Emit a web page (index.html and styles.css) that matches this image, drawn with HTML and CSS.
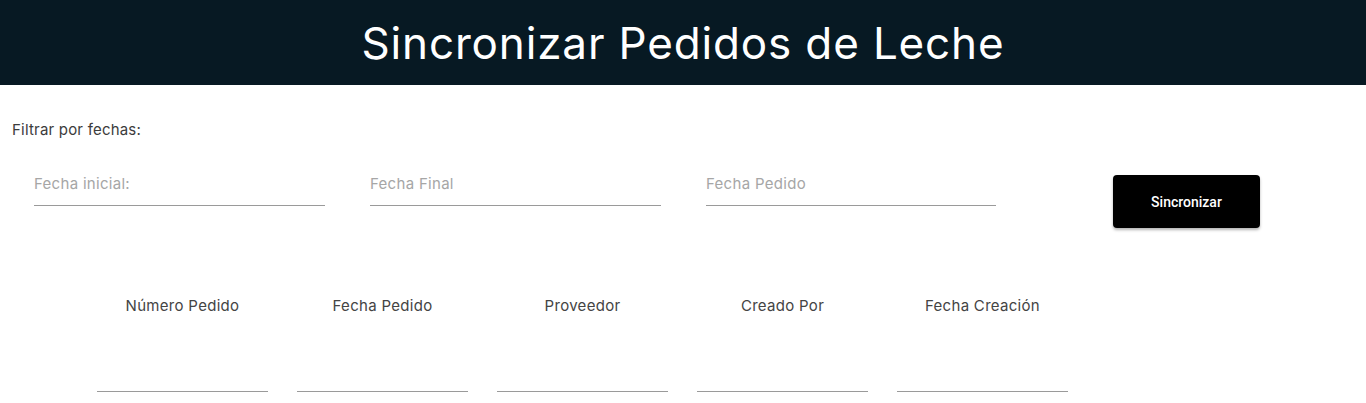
FILE: index.html
```html
<!DOCTYPE html>
<html lang="es">
<head>
<meta charset="utf-8">
<title>Sincronizar Pedidos de Leche</title>
<link rel="stylesheet" href="styles.css">
</head>
<body>
<header class="topbar">
  <h1 class="topbar-title">Sincronizar Pedidos de Leche</h1>
</header>
<main class="content">
  <section class="filters">
    <p class="filters-label">Filtrar por fechas:</p>
    <div class="filters-row">
      <div class="field"><input class="field-input" type="text" placeholder="Fecha inicial:"></div>
      <div class="field"><input class="field-input" type="text" placeholder="Fecha Final"></div>
      <div class="field"><input class="field-input" type="text" placeholder="Fecha Pedido"></div>
      <button class="sync-btn" type="button">Sincronizar</button>
    </div>
  </section>
  <section class="orders">
    <div class="orders-grid">
      <div class="orders-head">Número Pedido</div>
      <div class="orders-head">Fecha Pedido</div>
      <div class="orders-head">Proveedor</div>
      <div class="orders-head">Creado Por</div>
      <div class="orders-head">Fecha Creación</div>
      <div class="orders-cell"></div>
      <div class="orders-cell"></div>
      <div class="orders-cell"></div>
      <div class="orders-cell"></div>
      <div class="orders-cell"></div>
    </div>
  </section>
</main>
</body>
</html>
```
FILE: styles.css
```css
* { box-sizing: border-box; }

html, body {
  margin: 0;
  padding: 0;
  background: #ffffff;
  font-family: "Inter", "Open Sans", sans-serif;
}

.topbar {
  height: 85px;
  background: #071923;
  display: flex;
  align-items: center;
  justify-content: center;
}

.topbar-title {
  margin: 0;
  color: #ffffff;
  font-size: 44px;
  font-weight: 400;
  letter-spacing: 0.85px;
  line-height: 52px;
}

.filters {
  padding: 36px 12px 0;
}

.filters-label {
  margin: 0;
  font-size: 15px;
  line-height: 18px;
  letter-spacing: 0.2px;
  color: #3c3c3c;
}

.filters-row {
  display: flex;
  align-items: flex-start;
  gap: 45px;
  margin: 35px 0 0 22px;
}

.field {
  width: 291px;
}

.field:nth-child(3) {
  width: 290px;
}

.field-input {
  display: block;
  width: 100%;
  height: 32px;
  padding: 0 0 12px;
  border: none;
  border-bottom: 1px solid #9a9a9a;
  outline: none;
  background: transparent;
  font-family: inherit;
  font-size: 15px;
  letter-spacing: 0.3px;
  color: #333;
}

.field-input::placeholder {
  color: #a6a6a6;
}

.sync-btn {
  margin: 1px 0 0 72px;
  width: 147px;
  height: 53px;
  border: none;
  border-radius: 4px;
  background: #000000;
  color: #ffffff;
  font-family: "Roboto", sans-serif;
  font-size: 14px;
  font-weight: 500;
  box-shadow: 0 2px 3px rgba(0, 0, 0, 0.3);
  cursor: pointer;
}

.orders {
  margin-top: 64px;
  padding-left: 97px;
}

.orders-grid {
  display: grid;
  grid-template-columns: repeat(5, 171px);
  column-gap: 29px;
}

.orders-head {
  height: 28px;
  line-height: 28px;
  text-align: center;
  font-size: 15px;
  letter-spacing: 0.3px;
  color: #444444;
}

.orders-cell {
  height: 72px;
  border-bottom: 1px solid #9a9a9a;
}
```
